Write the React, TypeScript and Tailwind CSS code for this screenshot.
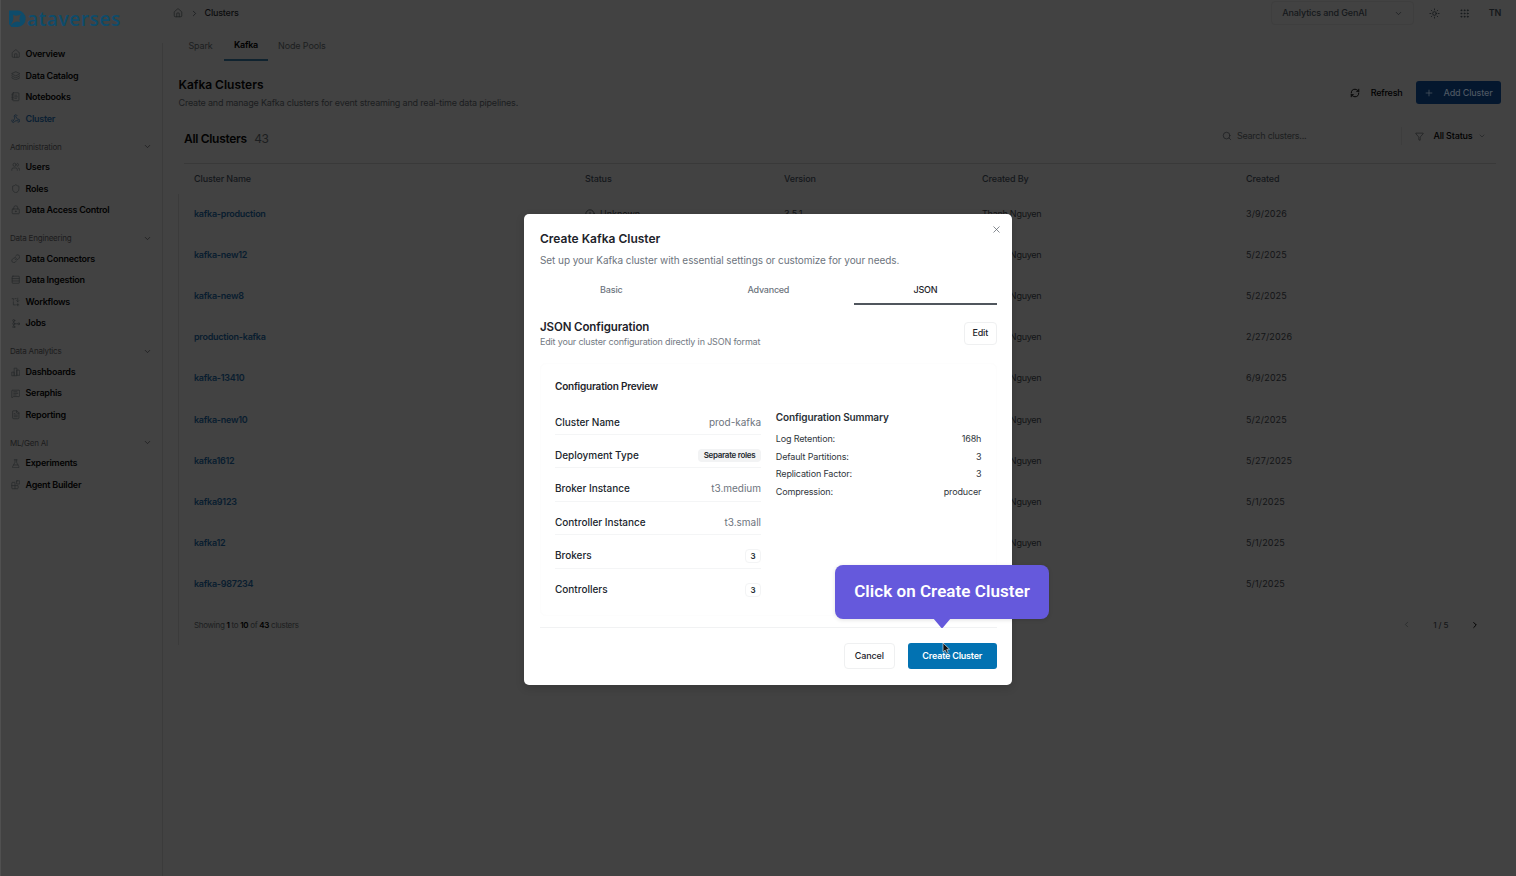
import React from "react";
import {
  House, Layers, NotebookText, Users, Shield, LockKeyhole, Link, Rows3, Webhook,
  MessageSquareText, FileText, FlaskConical, Blocks, ChevronDown,
  ChevronRight, ChevronLeft, Sun, Grip, RefreshCw, Plus, Search, Funnel, CircleAlert, X,
} from "lucide-react";

type IconProps = { size?: number; strokeWidth?: number; className?: string };
type Item = { label: string; icon: React.ElementType; active?: boolean };

function Glyph({ size = 24, strokeWidth = 2, className, children }: IconProps & { children: React.ReactNode }) {
  return (
    <svg
      width={size}
      height={size}
      viewBox="0 0 24 24"
      fill="none"
      stroke="currentColor"
      strokeWidth={strokeWidth}
      strokeLinecap="round"
      strokeLinejoin="round"
      className={className}
    >
      {children}
    </svg>
  );
}

const BarsIcon = (p: IconProps) => (
  <Glyph {...p}>
    <path d="M2 21v-8h6v8zM8 21V3h7v18zM15 8h4a3 3 0 0 1 3 3v10h-7z" />
  </Glyph>
);

const FlowIcon = (p: IconProps) => (
  <Glyph {...p}>
    <path d="M3 4h3v4M6 12v8h5M10 4h3M17 3v9M14 9l3 3 3-3M17 17v5M14.5 19.5h5" />
  </Glyph>
);

const JobsIcon = (p: IconProps) => (
  <Glyph {...p}>
    <circle cx="7" cy="4" r="2.6" />
    <circle cx="7" cy="12" r="2.6" />
    <circle cx="7" cy="20" r="2.6" />
    <circle cx="20" cy="12" r="2.4" />
    <path d="M10 12h7M7 7v2M7 15v2" />
  </Glyph>
);

const topItems: Item[] = [
  { label: "Overview", icon: House },
  { label: "Data Catalog", icon: Layers },
  { label: "Notebooks", icon: NotebookText },
  { label: "Cluster", icon: Webhook, active: true },
];

const sections: { title: string; items: Item[] }[] = [
  {
    title: "Administration",
    items: [
      { label: "Users", icon: Users },
      { label: "Roles", icon: Shield },
      { label: "Data Access Control", icon: LockKeyhole },
    ],
  },
  {
    title: "Data Engineering",
    items: [
      { label: "Data Connectors", icon: Link },
      { label: "Data Ingestion", icon: Rows3 },
      { label: "Workflows", icon: FlowIcon },
      { label: "Jobs", icon: JobsIcon },
    ],
  },
  {
    title: "Data Analytics",
    items: [
      { label: "Dashboards", icon: BarsIcon },
      { label: "Seraphis", icon: MessageSquareText },
      { label: "Reporting", icon: FileText },
    ],
  },
  {
    title: "ML/Gen AI",
    items: [
      { label: "Experiments", icon: FlaskConical },
      { label: "Agent Builder", icon: Blocks },
    ],
  },
];

type Cluster = { name: string; date: string; status?: string; version?: string };

const clusters: Cluster[] = [
  { name: "kafka-production", date: "3/9/2026", status: "Unknown", version: "3.5.1" },
  { name: "kafka-new12", date: "5/2/2025" },
  { name: "kafka-new8", date: "5/2/2025" },
  { name: "production-kafka", date: "2/27/2026" },
  { name: "kafka-13410", date: "6/9/2025" },
  { name: "kafka-new10", date: "5/2/2025" },
  { name: "kafka1612", date: "5/27/2025" },
  { name: "kafka9123", date: "5/1/2025" },
  { name: "kafka12", date: "5/1/2025" },
  { name: "kafka-987234", date: "5/1/2025" },
];

const summary = [
  ["Log Retention:", "168h"],
  ["Default Partitions:", "3"],
  ["Replication Factor:", "3"],
  ["Compression:", "producer"],
];

function NavItem({ label, icon: Icon, active }: Item) {
  return (
    <div className={`flex h-[21.57px] items-center pl-[9.5px] ${active ? "text-[#0a1f33]" : "text-[#030303]"}`}>
      <Icon size={9.5} strokeWidth={1.7} className={active ? "text-[#0a1f33]" : "text-[#26282a]"} />
      <span className="ml-[5.5px] font-semibold tracking-[-0.25px]">{label}</span>
    </div>
  );
}

function Sidebar() {
  return (
    <aside className="flex w-[163px] shrink-0 flex-col border-l border-[#505050]">
      <div className="flex h-[43.2px] items-start pt-[10px] pl-[8px] text-[#0e4c6b]">
        <svg width="18" height="18" viewBox="0 0 18 18" fill="currentColor">
          <path
            fillRule="evenodd"
            d="M0 .5h8.5a8.2 8.2 0 0 1 0 16.4H2.5L0 14zM12.4 3.4C10.4 5.8 10 8.6 10.9 12.2 8.4 10.5 5.2 11.4 .8 16 4.6 11 5 8 3.8 4.4 6.8 6.4 9 6 12.4 3.4z"
          />
        </svg>
        <span className="font-['Open_Sans',sans-serif] text-[19px] leading-[18px] font-semibold tracking-[0.62px]">
          ataverses
        </span>
      </div>
      <div className="grow border-r border-[#3b3b3b]">
        {topItems.map((i) => (
          <NavItem key={i.label} {...i} />
        ))}
        {sections.map((s) => (
          <div key={s.title}>
            <div className="mt-[10.2px] mb-[2.7px] flex h-[14px] items-center justify-between pr-[10px] pl-[9px] text-[8px] tracking-[-0.21px] text-[#1b1b1c]">
              {s.title}
              <ChevronDown size={9} strokeWidth={2} />
            </div>
            {s.items.map((i) => (
              <NavItem key={i.label} {...i} />
            ))}
          </div>
        ))}
      </div>
    </aside>
  );
}

const cols = "grid grid-cols-[391px_199px_198px_264px_1fr] items-center pl-[15.5px]";

function Main() {
  return (
    <main className="flex min-w-0 grow flex-col">
      <header className="flex h-[26px] items-center pl-[10px] text-[#0b0c0d]">
        <House size={10} strokeWidth={1.8} className="text-[#1e2022]" />
        <ChevronRight size={9} strokeWidth={2.2} className="ml-[6.5px] text-[#1a1c1e]" />
        <span className="ml-[6px] font-medium tracking-[-0.2px]">Clusters</span>
        <div className="ml-auto flex h-[24px] w-[143px] items-center justify-between rounded-[4px] border border-[#3e3e3e] pr-[10px] pl-[10.5px] text-[#15181b]">
          <span className="font-medium tracking-[-0.14px]">Analytics and GenAI</span>
          <ChevronDown size={9} strokeWidth={1.8} />
        </div>
        <Sun size={11} strokeWidth={1.8} className="ml-[15px] text-[#15181b]" />
        <Grip size={11} strokeWidth={1.8} className="ml-[19.5px] text-[#15181b]" />
        <span className="mr-[15px] ml-[18.5px] font-semibold tracking-[-0.3px] text-[#15181b]">TN</span>
      </header>

      <nav className="flex h-[35px] items-end pl-[14px] text-[#1c1e20]">
        <span className="flex h-[31px] w-[47px] items-center pl-[11.5px] tracking-[-0.15px]">Spark</span>
        <span className="flex h-[31px] w-[44px] items-center justify-center border-b-2 border-[#10232f] pt-px font-semibold tracking-[-0.28px] text-black">
          Kafka
        </span>
        <span className="flex h-[31px] items-center pl-[10px] tracking-[-0.12px]">Node Pools</span>
      </nav>

      <section className="flex h-[73px] items-center justify-between pr-[15px] pl-[15.5px]">
        <div className="pb-[6.5px]">
          <h1 className="text-[12px] leading-[18px] font-semibold tracking-[-0.02px] text-[#020202]">Kafka Clusters</h1>
          <p className="leading-[18px] tracking-[-0.19px] text-[#1b1d1f]">
            Create and manage Kafka clusters for event streaming and real-time data pipelines.
          </p>
        </div>
        <div className="flex items-center pb-[10px] font-medium">
          <RefreshCw size={10} strokeWidth={2.2} className="text-black" />
          <span className="ml-[10.5px] tracking-[-0.2px] text-black">Refresh</span>
          <button className="ml-[13.5px] flex h-[23px] w-[85px] items-center rounded-[3px] bg-[#04172e] pl-[8px] text-[#4c5661]">
            <Plus size={10} strokeWidth={1.8} />
            <span className="ml-[9.5px] tracking-[-0.16px]">Add Cluster</span>
          </button>
        </div>
      </section>

      <section className="mr-[20px] ml-[21px] flex h-[29.5px] items-center border-b border-[#393939]">
        <h2 className="-mt-[18.5px] text-[12px] font-semibold tracking-[-0.32px] text-[#020202]">All Clusters</h2>
        <span className="-mt-[18.5px] ml-[7.5px] text-[12px] tracking-[-0.5px] text-[#1c1e20]">43</span>
        <div className="-mt-[24px] ml-auto flex items-center">
          <Search size={10} strokeWidth={1.8} className="text-[#1c1e20]" />
          <span className="ml-[5px] w-[164px] tracking-[-0.24px] text-[#1c1e20]">Search clusters...</span>
          <span className="h-[18px] w-px bg-[#3d3d3d]" />
          <Funnel size={9} strokeWidth={1.8} className="ml-[13px] text-[#1c1e20]" />
          <span className="ml-[9.5px] font-medium tracking-[-0.16px] text-black">All Status</span>
          <ChevronDown size={8} strokeWidth={1.8} className="mr-[10.5px] ml-[5px] text-[#1c1e20]" />
        </div>
      </section>

      <section className="mr-[20px] ml-[15.5px] flex flex-col">
        <div className={`${cols} h-[30px] font-medium tracking-[-0.12px] text-[#14171b]`}>
          <span>Cluster Name</span>
          <span>Status</span>
          <span>Version</span>
          <span>Created By</span>
          <span>Created</span>
        </div>
        <div className="-ml-px border-l border-[#3b3b3b]">
          {clusters.map(({ name, date, status, version }) => (
            <div key={name} className={`${cols} h-[41.1px] text-[#121416]`}>
              <span className="font-semibold tracking-[-0.25px] text-[#091d2f]">{name}</span>
              <span className="flex items-center gap-[5px]">
                {status && <CircleAlert size={10} strokeWidth={1.8} />}
                {status}
              </span>
              <span>{version}</span>
              <span className="tracking-[-0.25px]">Thanh Nguyen</span>
              <span className="tracking-[0.15px]">{date}</span>
            </div>
          ))}
          <div className="flex h-[40.5px] items-center pl-[15.5px] text-[8px] text-[#1c1e20]">
            <span className="tracking-[-0.3px] [&>b]:font-semibold [&>b]:text-black">
              Showing <b>1</b> to <b>10</b> of <b>43</b> clusters
            </span>
            <ChevronLeft size={9} strokeWidth={2} className="ml-auto text-[#262829]" />
            <span className="ml-[22px] font-medium tracking-[-0.05px] text-[#141618]">1 / 5</span>
            <ChevronRight size={10} strokeWidth={2.4} className="mr-[16.5px] ml-[21px] text-black" />
          </div>
        </div>
      </section>
    </main>
  );
}

function Row({ label, children, last }: { label: string; children: React.ReactNode; last?: boolean }) {
  return (
    <div className={`flex h-[33.45px] items-start justify-between pt-[12px] ${last ? "" : "border-b border-[#f4f5f6]"}`}>
      <span className="text-[10px] leading-[17px] font-medium tracking-[-0.01px] text-[#20262d]">{label}</span>
      {children}
    </div>
  );
}

const value = "text-[10px] leading-[17px] tracking-[-0.03px] text-[#6d747d]";
const badge =
  "mt-[2px] flex h-[14px] w-[16px] items-center justify-center rounded-[4px] border border-[#f3f4f5] text-[8px] font-semibold text-[#23292f]";

function Modal() {
  return (
    <div className="absolute top-[213.5px] left-[524.4px] flex h-[471px] w-[488px] flex-col rounded-[5px] bg-white px-[15.6px] shadow-[0_3px_8px_rgba(0,0,0,0.15)]">
      <X size={11} strokeWidth={1.6} className="absolute top-[10.5px] right-[10.5px] text-[#5a6169]" />
      <h2 className="mt-[16px] text-[12px] leading-[18px] font-semibold tracking-[0px] text-[#1d232a]">
        Create Kafka Cluster
      </h2>
      <p className="mt-[3px] text-[10px] leading-[18px] tracking-[-0.07px] text-[#6d747d]">
        Set up your Kafka cluster with essential settings or customize for your needs.
      </p>
      <div className="mt-[7px] grid h-[26px] grid-cols-3 gap-[14.5px] text-center leading-[27px] font-medium text-[#6d747d]">
        <span className="tracking-[-0.2px]">Basic</span>
        <span className="tracking-[-0.25px]">Advanced</span>
        <span className="border-b-2 border-[#50565d] tracking-[-0.2px] text-[#1d232a]">JSON</span>
      </div>
      <div className="mt-[15px] flex h-[34px] items-center justify-between">
        <div>
          <h3 className="text-[11.5px] leading-[16px] font-semibold tracking-[-0.1px] text-[#1d232a]">JSON Configuration</h3>
          <p className="leading-[14px] tracking-[-0.17px] text-[#737a83]">
            Edit your cluster configuration directly in JSON format
          </p>
        </div>
        <button className="mb-[1px] h-[23px] w-[33px] rounded-[4px] border border-[#eff0f1] font-medium tracking-[-0.2px] text-[#1d232a]">
          Edit
        </button>
      </div>
      <div className="mt-[12.5px] h-[253px] rounded-[6px] border border-[#fdfdfd] px-[14px] pt-[13px]">
        <h4 className="text-[10px] leading-[18px] font-semibold tracking-[-0.22px] text-[#1d232a]">Configuration Preview</h4>
        <div className="mt-[6.5px] flex justify-between">
          <div className="w-[206px]">
            <Row label="Cluster Name"><span className={value}>prod-kafka</span></Row>
            <Row label="Deployment Type">
              <span className="mt-[2px] flex h-[13px] w-[63px] items-center justify-center rounded-[4px] bg-[#f2f3f4] text-[8px] font-semibold tracking-[-0.3px] text-[#23292f]">
                Separate roles
              </span>
            </Row>
            <Row label="Broker Instance"><span className={value}>t3.medium</span></Row>
            <Row label="Controller Instance"><span className={value}>t3.small</span></Row>
            <Row label="Brokers"><span className={badge}>3</span></Row>
            <Row label="Controllers" last><span className={badge}>3</span></Row>
          </div>
          <div className="w-[206px] pt-[7.5px] pr-[0.5px]">
            <h4 className="text-[10px] leading-[17px] font-semibold tracking-[-0.12px] text-[#2a3036]">Configuration Summary</h4>
            <div className="mt-[4px]">
              {summary.map(([k, v]) => (
                <div key={k} className="flex h-[17.8px] items-center justify-between tracking-[-0.15px] text-[#30363c]">
                  <span>{k}</span>
                  <span>{v}</span>
                </div>
              ))}
            </div>
          </div>
        </div>
      </div>
      <div className="mt-[10.5px] flex justify-end gap-[13px] border-t border-[#f1f2f3] pt-[15px]">
        <button className="h-[26px] w-[51px] rounded-[4px] border border-[#eff0f1] font-medium tracking-[-0.15px] text-[#1d232a]">
          Cancel
        </button>
        <button className="h-[26px] w-[89px] rounded-[3px] bg-[#0272b2] font-semibold tracking-[-0.2px] text-white">
          Create Cluster
        </button>
      </div>
    </div>
  );
}

export default function App() {
  return (
    <div className="relative flex h-[876px] w-[1516px] overflow-hidden bg-[#424242] font-[Inter,sans-serif] text-[9px] leading-[12px]">
      <Sidebar />
      <Main />
      <Modal />
      <svg className="absolute top-[641.5px] left-[940.5px]" width="10" height="13" viewBox="0 0 10 13">
        <path d="M2 1v9l2.1-1.9 1.6 3.3 1.6-.8-1.5-3.2 2.7-.2z" fill="#111" stroke="#d5dbe0" strokeWidth=".7" />
      </svg>
      <div className="absolute top-[565px] left-[835px] flex h-[54px] w-[214px] items-center justify-center rounded-[8px] bg-[#6559dc] pb-[2px] font-[Roboto,sans-serif] text-[17px] font-semibold tracking-[0.05px] text-white shadow-[0_1px_4px_rgba(0,0,0,0.12)]">
        Click on Create Cluster
        <svg className="absolute top-[53px] left-[98px]" width="18" height="11" viewBox="0 0 18 11">
          <path d="M0 0h18L10 9.5q-1 1.2-2 0z" fill="#6559dc" />
        </svg>
      </div>
    </div>
  );
}
